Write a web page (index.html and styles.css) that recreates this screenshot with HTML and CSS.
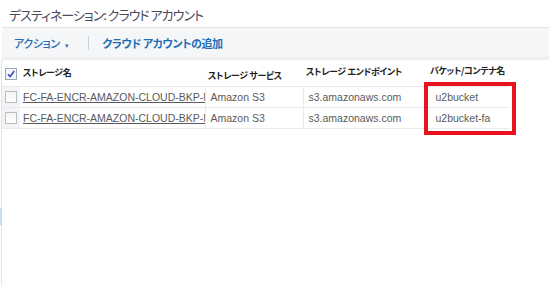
FILE: index.html
```html
<!DOCTYPE html>
<html lang="ja">
<head>
<meta charset="utf-8">
<link rel="stylesheet" href="styles.css">
</head>
<body>
<div class="page">
  <div class="title">デスティネーション: クラウド アカウント</div>
  <div class="toolbar">
    <span class="action">アクション <span class="caret">▾</span></span>
    <span class="sep"></span>
    <span class="add">クラウド アカウントの追加</span>
  </div>
  <div class="strip"></div>
  <div class="panel">
    <span class="handle"></span>
    <table class="grid">
      <colgroup>
        <col class="c-chk"><col class="c-name"><col class="c-svc"><col class="c-ep"><col class="c-bkt">
      </colgroup>
      <thead>
        <tr>
          <th class="chk"><span class="box checked"><svg viewBox="0 0 10 10" width="10" height="10"><path d="M2 5.2 L4.2 7.6 L8.2 2" fill="none" stroke="#2c4fb0" stroke-width="1.6"/></svg></span></th>
          <th class="h-name">ストレージ名</th>
          <th class="h-svc">ストレージ サービス</th>
          <th class="h-ep">ストレージ エンドポイント</th>
          <th class="h-bkt">バケット/コンテナ名</th>
        </tr>
      </thead>
      <tbody>
        <tr>
          <td class="chk"><span class="box"></span></td>
          <td class="name"><span class="link">FC-FA-ENCR-AMAZON-CLOUD-BKP-N</span></td>
          <td>Amazon S3</td>
          <td>s3.amazonaws.com</td>
          <td class="bkt">u2bucket</td>
        </tr>
        <tr>
          <td class="chk"><span class="box"></span></td>
          <td class="name"><span class="link">FC-FA-ENCR-AMAZON-CLOUD-BKP-N</span></td>
          <td>Amazon S3</td>
          <td>s3.amazonaws.com</td>
          <td class="bkt">u2bucket-fa</td>
        </tr>
      </tbody>
    </table>
    <div class="highlight"></div>
  </div>
</div>
</body>
</html>
```
FILE: styles.css
```css
html, body {
  margin: 0;
  padding: 0;
  background: #ffffff;
}
.page {
  width: 549px;
  height: 285px;
  overflow: hidden;
  font-family: "Noto Sans CJK JP", "Liberation Sans", sans-serif;
}
.title {
  height: 27px;
  padding-left: 9px;
  line-height: 30px;
  font-size: 13px;
  color: #4a4a5c;
  font-feature-settings: "palt";
  letter-spacing: -1px;
}
.toolbar {
  margin-left: 2px;
  height: 29px;
  background: #f4f6f8;
  border-top: 1px solid #e1e5ea;
  display: flex;
  align-items: center;
  padding-left: 12px;
  font-size: 11px;
  color: #1f6db4;
  font-feature-settings: "palt";
  letter-spacing: -0.4px;
}
.action {
  font-weight: 500;
}
.caret {
  font-size: 7px;
  margin-left: 3px;
  color: #3a6fa8;
}
.sep {
  width: 1px;
  height: 14px;
  background: #c9d0d8;
  margin: 0 13px 0 20px;
}
.add {
  font-weight: 700;
}
.strip {
  margin-left: 2px;
  height: 3px;
  background: #eceff2;
}
.panel {
  position: relative;
  margin-left: 1px;
  border-left: 1px solid #dfe4ea;
  height: 226px;
}
.handle {
  position: absolute;
  left: -2px;
  top: 148px;
  width: 2px;
  height: 17px;
  background: #c7def0;
}
.grid {
  border-collapse: collapse;
  table-layout: fixed;
  width: 508px;
}
.c-chk { width: 18px; }
.c-name { width: 185px; }
.c-svc { width: 98px; }
.c-ep { width: 122px; }
.c-bkt { width: 85px; }
.grid th {
  height: 26px;
  padding: 0 0 0 3px;
  text-align: left;
  font-size: 9px;
  font-weight: 700;
  color: #222222;
  white-space: nowrap;
  font-feature-settings: "palt";
  letter-spacing: -0.4px;
  vertical-align: top;
  padding-top: 6px;
  box-sizing: border-box;
}
.grid th.h-svc { padding-top: 9px; }
.grid th.h-ep { padding-top: 5px; }
.grid th.h-bkt { padding-top: 4px; padding-left: 5px; }
.grid th.chk { padding: 6px 0 0 3px; }
.grid td {
  height: 21px;
  padding: 0 0 0 5px;
  font-family: "Liberation Sans", Arial, sans-serif;
  font-size: 10.5px;
  color: #5a5a5a;
  border-top: 1px solid #e7eaee;
  border-bottom: 1px solid #e7eaee;
  border-left: 1px solid #e7eaee;
  white-space: nowrap;
  overflow: hidden;
  text-overflow: clip;
  box-sizing: border-box;
}
.grid td.chk {
  background: #f3f4f6;
  border-left: none;
  padding: 0 0 0 3px;
}
.grid td.name {
  padding-left: 3px;
  border-left: none;
}
.grid td.bkt { padding-left: 10px; }
.link {
  text-decoration: underline;
  color: #5a5a5a;
}
.box {
  display: inline-block;
  width: 10px;
  height: 10px;
  border: 1px solid #b9bec4;
  background: linear-gradient(#f2f3f4, #ffffff);
  vertical-align: middle;
  box-sizing: content-box;
}
.box svg { display: block; }
.box.checked { border-color: #9aa6b6; background: #f6f8fc; }
.highlight {
  position: absolute;
  left: 422px;
  top: 22px;
  width: 84px;
  height: 45px;
  border: 4px solid #e8131f;
}
```
